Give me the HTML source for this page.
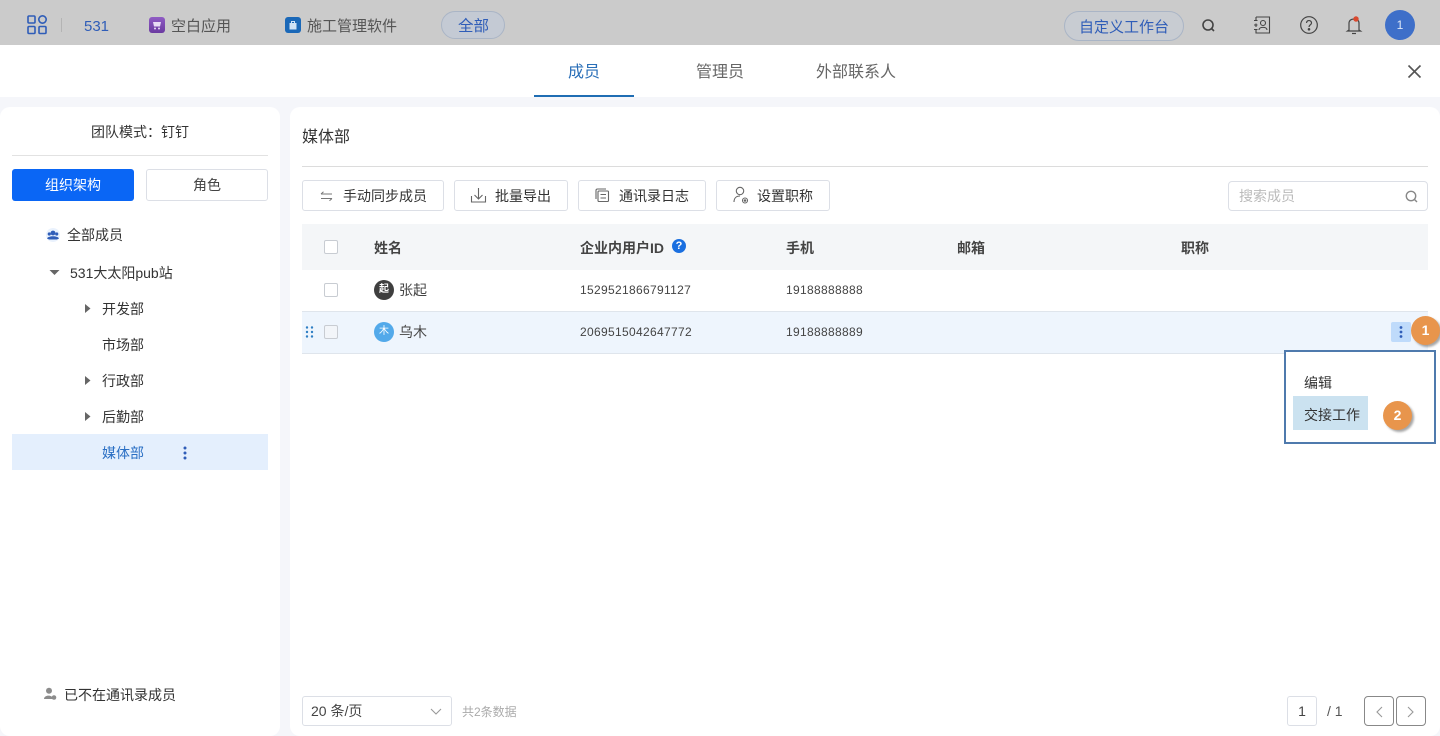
<!DOCTYPE html>
<html lang="zh"><head><meta charset="utf-8"><title>成员</title>
<style>
html,body{margin:0;padding:0;width:1440px;height:736px;overflow:hidden;background:#f5f6fa;font-family:"Liberation Sans","Noto Sans CJK SC",sans-serif;color:#333}
body{position:relative}
.a{position:absolute;box-sizing:border-box}
.t{position:absolute;white-space:nowrap;line-height:20px;height:20px;margin-top:1px;font-size:14px;color:#333}
.btn{position:absolute;top:180px;height:31px;box-sizing:border-box;border:1px solid #dcdfe6;border-radius:3px;background:#fff}
.cb{position:absolute;width:14px;height:14px;box-sizing:border-box;border:1px solid #c8ccd2;border-radius:2px;background:#fff;left:324px}
svg{position:absolute;overflow:visible}
.th{font-weight:700;color:#444;top:237px}
.num{font-size:12px;color:#444;letter-spacing:.33px}
.badge{position:absolute;border-radius:50%;background:#e8954c;color:#fff;font-weight:700;font-size:14px;text-align:center;box-shadow:2px 2px 2px rgba(0,0,0,.35)}
</style></head><body>

<!-- top bar -->
<div class="a" style="left:0;top:0;width:1440px;height:45px;background:#cbcbcb"></div>
<svg style="left:27px;top:15px" width="20" height="20" fill="none" stroke="#2f5db8" stroke-width="1.6"><rect x="1" y="1" width="7" height="7" rx="1"/><circle cx="15.500" cy="4.500" r="3.700"/><rect x="1" y="11.500" width="7" height="7" rx="1"/><rect x="12" y="11.500" width="7" height="7" rx="1"/></svg>
<div class="a" style="left:61px;top:18px;width:1px;height:14px;background:#b4b4b4"></div>
<div class="t" style="left:84px;top:16px;font-size:15px;color:#2f5db8">531</div>
<div class="a" style="left:149px;top:17px;width:16px;height:16px;border-radius:3px;background:linear-gradient(#8f5cc4,#6b3aa0)"></div>
<svg style="left:152px;top:20px" width="10" height="10"><path d="M1 2H9L8 6.500H2Z" fill="#e9dcf5"/><circle cx="3" cy="8.500" r="1" fill="#e9dcf5"/><circle cx="7" cy="8.500" r="1" fill="#e9dcf5"/></svg>
<div class="t" style="left:171px;top:16px;font-size:15px;color:#555">空白应用</div>
<div class="a" style="left:285px;top:17px;width:16px;height:16px;border-radius:3px;background:#1a68b8"></div>
<svg style="left:288px;top:20px" width="10" height="10"><path d="M1.500 3H8.500V9.500H1.500Z" fill="#cfe2f5"/><path d="M3.500 3.500V1.500H6.500V3.500" fill="none" stroke="#cfe2f5"/></svg>
<div class="t" style="left:307px;top:16px;font-size:15px;color:#555">施工管理软件</div>
<div class="a" style="left:441px;top:11px;width:64px;height:28px;border-radius:14px;background:#c4cad4;border:1px solid #aab5c6"></div>
<div class="t" style="left:458px;top:16px;font-size:15.500px;color:#2f5db8">全部</div>
<div class="a" style="left:1064px;top:11px;width:120px;height:30px;border-radius:15px;background:#c8ccd2;border:1px solid #aab5c6"></div>
<div class="t" style="left:1079px;top:17px;font-size:15px;color:#2f5db8">自定义工作台</div>
<svg style="left:1202px;top:19px" width="14" height="14" fill="none" stroke="#444" stroke-width="1.600"><circle cx="6" cy="6" r="5"/><path d="M9.500 9.500L12 12"/></svg>
<svg style="left:1253px;top:16px" width="18" height="18" fill="none" stroke="#444" stroke-width="1.100"><path d="M3 1H16.500V17H3V14M3 11V7.500M3 4.500V1M1 4.500H4.500M1 9H4.500M1 13.500H4.500"/><circle cx="10" cy="7" r="2.500"/><path d="M6 14C6 10.500 14 10.500 14 14"/></svg>
<svg style="left:1300px;top:16px" width="18" height="18" fill="none" stroke="#444" stroke-width="1.200"><circle cx="9" cy="9" r="8.300"/><path d="M6.500 7C6.500 3.500 11.800 4 11.500 7.200C11.300 8.800 9 8.800 9 11"/><circle cx="9" cy="13.300" r=".7" fill="#444"/></svg>
<svg style="left:1346px;top:16px" width="16" height="20" fill="none" stroke="#444" stroke-width="1.200"><path d="M3 14V7.500C3 4.500 5 3 8 3C11 3 13 4.500 13 7.500V14L14.500 15H1.500Z"/><path d="M6 17.500H10"/><circle cx="10" cy="3" r="2.700" fill="#d9492f" stroke="none"/></svg>
<div class="a" style="left:1385px;top:10px;width:30px;height:30px;border-radius:50%;background:#3e6fc9"></div>
<div class="t" style="left:1385px;top:14px;width:30px;text-align:center;font-size:12px;color:#dfe8f7">1</div>

<!-- tabs -->
<div class="a" style="left:0;top:45px;width:1440px;height:52px;background:#fff"></div>
<div class="t" style="left:568px;top:62px;font-size:16px;color:#2a6fb8">成员</div>
<div class="t" style="left:696px;top:62px;font-size:16px;color:#666">管理员</div>
<div class="t" style="left:816px;top:62px;font-size:16px;color:#666">外部联系人</div>
<div class="a" style="left:534px;top:95px;width:100px;height:2px;background:#1f6db3"></div>
<svg style="left:1408px;top:65px" width="13" height="13" fill="none" stroke="#555" stroke-width="1.600"><path d="M.5 .5L12.500 12.500M12.500 .5L.5 12.500"/></svg>

<!-- left panel -->
<div class="a" style="left:0;top:107px;width:280px;height:629px;background:#fff;border-radius:10px 10px 10px 10px"></div>
<div class="t" style="left:91px;top:121px">团队模式<span style='font-family:"Liberation Sans","Noto Sans CJK TC",sans-serif'>：</span>钉钉</div>
<div class="a" style="left:12px;top:155px;width:256px;height:1px;background:#e2e2e2"></div>
<div class="a" style="left:12px;top:169px;width:122px;height:32px;background:#0a66f5;border-radius:3px"></div>
<div class="t" style="left:12px;top:174px;width:122px;text-align:center;color:#fff">组织架构</div>
<div class="a" style="left:146px;top:169px;width:122px;height:32px;background:#fff;border:1px solid #dcdfe6;border-radius:3px"></div>
<div class="t" style="left:146px;top:174px;width:122px;text-align:center;color:#444">角色</div>
<div class="a" style="left:46px;top:228px;width:14px;height:14px;border-radius:50%;background:#eaf2fd"></div>
<svg style="left:47px;top:229px" width="12" height="12" fill="#2f5db8"><circle cx="6" cy="4" r="2.400"/><circle cx="2.300" cy="5" r="1.600"/><circle cx="9.700" cy="5" r="1.600"/><path d="M0 9.500C1 6.500 11 6.500 12 9.500L10 10.500H2Z"/></svg>
<div class="t" style="left:67px;top:224px">全部成员</div>
<svg style="left:49px;top:269px" width="12" height="8"><path d="M0.500 1H10.500L5.500 6Z" fill="#666"/></svg>
<div class="t" style="left:70px;top:262px">531大太阳pub站</div>
<svg style="left:84px;top:303px" width="8" height="12"><path d="M1 1V10L6.500 5.500Z" fill="#666"/></svg>
<div class="t" style="left:102px;top:298px">开发部</div>
<div class="t" style="left:102px;top:334px">市场部</div>
<svg style="left:84px;top:375px" width="8" height="12"><path d="M1 1V10L6.500 5.500Z" fill="#666"/></svg>
<div class="t" style="left:102px;top:370px">行政部</div>
<svg style="left:84px;top:411px" width="8" height="12"><path d="M1 1V10L6.500 5.500Z" fill="#666"/></svg>
<div class="t" style="left:102px;top:406px">后勤部</div>
<div class="a" style="left:12px;top:434px;width:256px;height:36px;background:#e4effd"></div>
<div class="t" style="left:102px;top:442px;color:#2a6fc4">媒体部</div>
<svg style="left:183px;top:446px" width="4" height="14" fill="#2f5db8"><circle cx="2" cy="2" r="1.500"/><circle cx="2" cy="7" r="1.500"/><circle cx="2" cy="12" r="1.500"/></svg>
<svg style="left:43px;top:687px" width="14" height="14" fill="#8c8c8c"><circle cx="6" cy="3.800" r="3"/><path d="M1 12C1 7.500 10 7.500 10 12Z"/><circle cx="11" cy="10.500" r="2.300"/></svg>
<div class="t" style="left:64px;top:684px">已不在通讯录成员</div>

<!-- right panel -->
<div class="a" style="left:290px;top:107px;width:1150px;height:629px;background:#fff;border-radius:10px"></div>
<div class="t" style="left:302px;top:127px;font-size:16px;color:#333">媒体部</div>
<div class="a" style="left:302px;top:166px;width:1126px;height:1px;background:#dcdcdc"></div>

<div class="btn" style="left:302px;width:142px"></div>
<svg style="left:320px;top:191px" width="13" height="10" fill="none" stroke="#777" stroke-width="1"><path d="M1 3H12M1 3L3.500 .8M12 7.500H1M12 7.500L9.500 9.700"/></svg>
<div class="t" style="left:343px;top:185px">手动同步成员</div>
<div class="btn" style="left:454px;width:114px"></div>
<svg style="left:470px;top:187px" width="18" height="17" fill="none" stroke="#666" stroke-width="1.100"><path d="M1.500 9V15H15.500V9M8.500 1V11.500M4.500 8L8.500 12L12.500 8"/></svg>
<div class="t" style="left:495px;top:185px">批量导出</div>
<div class="btn" style="left:578px;width:128px"></div>
<svg style="left:595px;top:188px" width="15" height="15" fill="none" stroke="#666" stroke-width="1.100"><path d="M1 11V2.500Q1 1 2.500 1H11"/><rect x="3" y="3" width="10.500" height="10.500" rx="1"/><path d="M5.500 6.500H11M5.500 10H11" stroke-width="1"/></svg>
<div class="t" style="left:619px;top:185px">通讯录日志</div>
<div class="btn" style="left:716px;width:114px"></div>
<svg style="left:733px;top:186px" width="16" height="19" fill="none" stroke="#666" stroke-width="1.100"><circle cx="7" cy="5" r="3.700"/><path d="M1 16C1 12 3.500 10 7 10"/><circle cx="12" cy="14.500" r="2.500"/><circle cx="12" cy="14.500" r=".7" fill="#666"/></svg>
<div class="t" style="left:757px;top:185px">设置职称</div>

<div class="a" style="left:1228px;top:181px;width:200px;height:30px;border:1px solid #dcdfe6;border-radius:4px;background:#fff"></div>
<div class="t" style="left:1239px;top:185px;color:#bbb">搜索成员</div>
<svg style="left:1405px;top:190px" width="13" height="13" fill="none" stroke="#888" stroke-width="1.400"><circle cx="6" cy="6" r="4.700"/><path d="M9.500 9.500L12 12"/></svg>

<!-- table -->
<div class="a" style="left:302px;top:224px;width:1126px;height:46px;background:#f4f6f8"></div>
<div class="cb" style="top:240px"></div>
<div class="t th" style="left:374px">姓名</div>
<div class="t th" style="left:580px">企业内用户ID</div>
<div class="a" style="left:672px;top:239px;width:14px;height:14px;border-radius:50%;background:#1a6fe0;color:#fff;font-size:11px;font-weight:700;line-height:14px;text-align:center">?</div>
<div class="t th" style="left:786px">手机</div>
<div class="t th" style="left:957px">邮箱</div>
<div class="t th" style="left:1181px">职称</div>

<div class="a" style="left:302px;top:311px;width:1126px;height:43px;background:#eef5fd;border-top:1px solid #dfe5ec;border-bottom:1px solid #dfe5ec"></div>

<div class="cb" style="top:283px"></div>
<div class="a" style="left:374px;top:280px;width:20px;height:20px;border-radius:50%;background:#3f3f3f;color:#fff;font-size:10px;font-weight:700;line-height:20px;text-align:center">起</div>
<div class="t" style="left:399px;top:279px;color:#444">张起</div>
<div class="t num" style="left:580px;top:279px">1529521866791127</div>
<div class="t num" style="left:786px;top:279px">19188888888</div>

<svg style="left:305px;top:326px" width="9" height="13" fill="#2f7fc4"><circle cx="2" cy="1.500" r="1.200"/><circle cx="7" cy="1.500" r="1.200"/><circle cx="2" cy="6" r="1.200"/><circle cx="7" cy="6" r="1.200"/><circle cx="2" cy="10.500" r="1.200"/><circle cx="7" cy="10.500" r="1.200"/></svg>
<div class="cb" style="top:325px;background:#f2f5f9"></div>
<div class="a" style="left:374px;top:322px;width:20px;height:20px;border-radius:50%;background:#52a9ea;color:#fff;font-size:10px;line-height:20px;text-align:center">木</div>
<div class="t" style="left:399px;top:321px;color:#444">乌木</div>
<div class="t num" style="left:580px;top:321px">2069515042647772</div>
<div class="t num" style="left:786px;top:321px">19188888889</div>

<div class="a" style="left:1391px;top:322px;width:20px;height:20px;border-radius:2px;background:#bfdbfb"></div>
<svg style="left:1399px;top:325px" width="4" height="14" fill="#2f5db8"><circle cx="2" cy="2.500" r="1.400"/><circle cx="2" cy="7" r="1.400"/><circle cx="2" cy="11.500" r="1.400"/></svg>
<div class="badge" style="left:1411px;top:316px;width:29px;height:29px;line-height:29px">1</div>

<!-- menu -->
<div class="a" style="left:1284px;top:350px;width:152px;height:94px;background:#fff;border:2px solid #4f7aad"></div>
<div class="t" style="left:1304px;top:372px">编辑</div>
<div class="a" style="left:1293px;top:396px;width:75px;height:34px;background:#cbe2f0"></div>
<div class="t" style="left:1304px;top:404px">交接工作</div>
<div class="badge" style="left:1383px;top:401px;width:29px;height:29px;line-height:28px">2</div>

<!-- footer -->
<div class="a" style="left:302px;top:696px;width:150px;height:30px;border:1px solid #dcdfe6;border-radius:3px;background:#fff"></div>
<div class="t" style="left:311px;top:700px;color:#444">20 条/页</div>
<svg style="left:430px;top:708px" width="12" height="8" fill="none" stroke="#999" stroke-width="1.100"><path d="M1 1L6 6L11 1"/></svg>
<div class="t" style="left:462px;top:701px;font-size:12px;color:#aaa">共2条数据</div>
<div class="a" style="left:1287px;top:696px;width:30px;height:30px;border:1px solid #dcdfe6;border-radius:3px;background:#fff"></div>
<div class="t" style="left:1287px;top:700px;width:30px;text-align:center;color:#444">1</div>
<div class="t" style="left:1327px;top:700px;color:#555">/ 1</div>
<div class="a" style="left:1364px;top:696px;width:30px;height:30px;border:1px solid #888;border-radius:4px;background:#fff"></div>
<div class="a" style="left:1396px;top:696px;width:30px;height:30px;border:1px solid #888;border-radius:4px;background:#fff"></div>
<svg style="left:1376px;top:706px" width="7" height="12" fill="none" stroke="#999" stroke-width="1.100"><path d="M6 1L1 6L6 11"/></svg>
<svg style="left:1407px;top:706px" width="7" height="12" fill="none" stroke="#999" stroke-width="1.100"><path d="M1 1L6 6L1 11"/></svg>
</body></html>
